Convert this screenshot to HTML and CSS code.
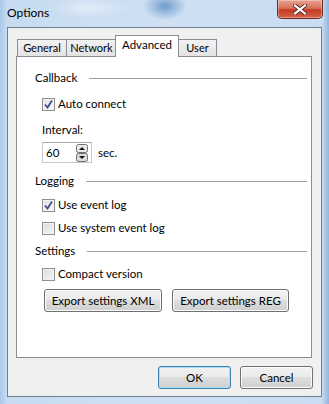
FILE: index.html
```html
<!DOCTYPE html>
<html lang="en">
<head>
  <meta charset="UTF-8" />
  <title>Options</title>
  <link rel="stylesheet" href="styles.css">
</head>
<body>
  <div class="window">
    <div class="titlebar">
      <span class="title">Options</span>
      <span class="close-btn">
        <svg width="14" height="11" viewBox="0 0 14 11">
          <path d="M2 1.5 L12 9.5 M12 1.5 L2 9.5" stroke="#5a2a22" stroke-width="4" stroke-linecap="square"/>
          <path d="M2 1.5 L12 9.5 M12 1.5 L2 9.5" stroke="#fff" stroke-width="2.2" stroke-linecap="square"/>
        </svg>
      </span>
    </div>
    <div class="client">
      <div class="tabs">
        <div class="tab t-general">General</div>
        <div class="tab t-network">Network</div>
        <div class="tab active">Advanced</div>
        <div class="tab t-user">User</div>
      </div>
      <div class="panel">
        <div class="group-head g1"><span>Callback</span><i></i></div>
        <label class="check c1">
          <span class="box checked">
            <svg width="11" height="11" viewBox="0 0 11 11"><path d="M2 5.5 L4.5 8.5 L9 1.5" fill="none" stroke="#3b4f8c" stroke-width="1.8"/></svg>
          </span>
          Auto connect
        </label>
        <div class="field-label">Interval:</div>
        <div class="spin-row">
          <div class="spin">
            <span class="spin-val">60</span>
            <span class="spin-btns">
              <svg width="12" height="18" viewBox="0 0 12 18">
                <rect x="0.5" y="0.5" width="11" height="8" rx="2" fill="#e9e9e9" stroke="#707070"/>
                <rect x="0.5" y="9.5" width="11" height="8" rx="2" fill="#dcdcdc" stroke="#707070"/>
                <path d="M3 6 L6 3 L9 6 Z" fill="#111"/>
                <path d="M3 12 L6 15 L9 12 Z" fill="#111"/>
              </svg>
            </span>
          </div>
          <span class="unit">sec.</span>
        </div>
        <div class="group-head g2"><span>Logging</span><i></i></div>
        <label class="check c2">
          <span class="box checked">
            <svg width="11" height="11" viewBox="0 0 11 11"><path d="M2 5.5 L4.5 8.5 L9 1.5" fill="none" stroke="#3b4f8c" stroke-width="1.8"/></svg>
          </span>
          Use event log
        </label>
        <label class="check c3"><span class="box"></span>Use system event log</label>
        <div class="group-head g3"><span>Settings</span><i></i></div>
        <label class="check c3"><span class="box"></span>Compact version</label>
        <div class="btn-row">
          <button class="btn export-xml">Export settings XML</button>
          <button class="btn export-reg">Export settings REG</button>
        </div>
      </div>
      <div class="footer">
        <button class="btn dlg default">OK</button>
        <button class="btn dlg">Cancel</button>
      </div>
    </div>
  </div>
</body>
</html>
```

FILE: styles.css
```css
body {
  margin: 0;
  font-family: 'Lato', 'Noto Sans', Arial, sans-serif;
  font-size: 11.5px;
  color: #000;
}
.window {
  width: 329px;
  height: 404px;
  background:
    radial-gradient(ellipse 22px 14px at 165px 6px, #6f9ccd 0%, rgba(111,156,205,0) 100%),
    radial-gradient(ellipse 40px 10px at 90px 8px, #e2ecf7 0%, rgba(226,236,247,0) 100%),
    linear-gradient(90deg, #a9c8ea 0px, #c7dcf1 7px, #cfe0f3 50%, #c9dcf1 322px, #8fb5dd 329px);
  overflow: hidden;
}
.titlebar {
  height: 27px;
  display: flex;
  justify-content: space-between;
  align-items: flex-start;
}
.title {
  padding: 5px 0 0 7px;
  font-size: 12px;
  line-height: 16px;
}
.close-btn {
  width: 44px;
  height: 18px;
  margin-right: 6px;
  border: 1px solid #6b2a20;
  border-top: none;
  border-radius: 0 0 5px 5px;
  background: linear-gradient(#eaa090 0%, #d7735c 45%, #c43a22 55%, #d5644a 100%);
  box-shadow: inset 0 0 0 1px rgba(255,255,255,0.35);
  display: flex;
  align-items: center;
  justify-content: center;
}
.client {
  margin: 0 7px 0 7px;
  height: 370px;
  background: #f0f0f0;
  border: 1px solid #6d7f94;
  box-sizing: border-box;
}
.tabs {
  display: flex;
  align-items: flex-end;
  height: 21px;
  margin: 7px 0 0 9px;
  position: relative;
  z-index: 1;
}
.tab {
  box-sizing: border-box;
  height: 17px;
  line-height: 16px;
  font-size: 11px;
  text-align: center;
  border: 1px solid #898c95;
  border-bottom: none;
  background: linear-gradient(#f2f2f2, #e3e3e3);
  margin-right: -1px;
}
.t-general { width: 50px; }
.t-network { width: 51px; }
.t-user { width: 39px; }
.tab.active {
  height: 22px;
  line-height: 18px;
  font-size: 11.5px;
  width: 64px;
  background: #fff;
  margin: 0 -1px -1px -1px;
  position: relative;
  z-index: 2;
}
.panel {
  margin: 0 9px 0 8px;
  height: 302px;
  background: #fff;
  border: 1px solid #898c95;
  box-sizing: border-box;
  display: flex;
  flex-direction: column;
}
.group-head {
  display: flex;
  align-items: center;
  height: 16px;
  line-height: 16px;
  padding: 0 4px 0 18px;
}
.group-head span { margin-right: 12px; }
.group-head i {
  flex: 1;
  height: 1px;
  background: #a0a0a0;
}
.g1 { margin-top: 13px; }
.g2 { margin-top: 10px; }
.g3 { margin-top: 7px; }
.check {
  display: flex;
  align-items: center;
  height: 16px;
  line-height: 16px;
  padding-left: 25px;
}
.c1 { margin-top: 10px; }
.c2 { margin-top: 8px; }
.c3 { margin-top: 7px; }
.box {
  width: 11px;
  height: 11px;
  border: 1px solid #8e8f8f;
  background: linear-gradient(135deg, #dcdcdc, #f6f6f6);
  box-shadow: inset 0 0 0 1px #f4f4f4;
  margin-right: 3px;
  display: flex;
  align-items: center;
  justify-content: center;
}
.box.checked { background: linear-gradient(135deg, #e0e0e0, #fafafa); }
.field-label {
  height: 16px;
  line-height: 16px;
  padding-left: 25px;
  margin-top: 10px;
}
.spin-row {
  display: flex;
  align-items: center;
  padding-left: 25px;
  margin-top: 4px;
}
.spin {
  width: 50px;
  height: 21px;
  box-sizing: border-box;
  border: 1px solid #c6c9cf;
  border-top-color: #abadb3;
  display: flex;
  align-items: center;
  justify-content: space-between;
  padding: 0 3px 0 3px;
}
.spin-btns { display: flex; }
.unit { margin-left: 6px; }
.btn-row {
  display: flex;
  gap: 10px;
  padding-left: 27px;
  margin-top: 7px;
}
.btn {
  font-family: inherit;
  font-size: 11.5px;
  color: #000;
  height: 23px;
  padding: 0;
  border: 1px solid #707070;
  border-radius: 3px;
  background: linear-gradient(#f2f2f2 0%, #ebebeb 45%, #dddddd 50%, #cfcfcf 100%);
  box-shadow: inset 0 0 0 1px #fbfbfb;
}
.export-xml { width: 118px; }
.export-reg { width: 117px; }
.footer {
  display: flex;
  justify-content: flex-end;
  gap: 9px;
  padding: 8px 8px 0 0;
}
.dlg { width: 73px; }
.dlg.default {
  border-color: #3c7fb1;
  box-shadow: inset 0 0 0 1px #aee0f5;
}
```
